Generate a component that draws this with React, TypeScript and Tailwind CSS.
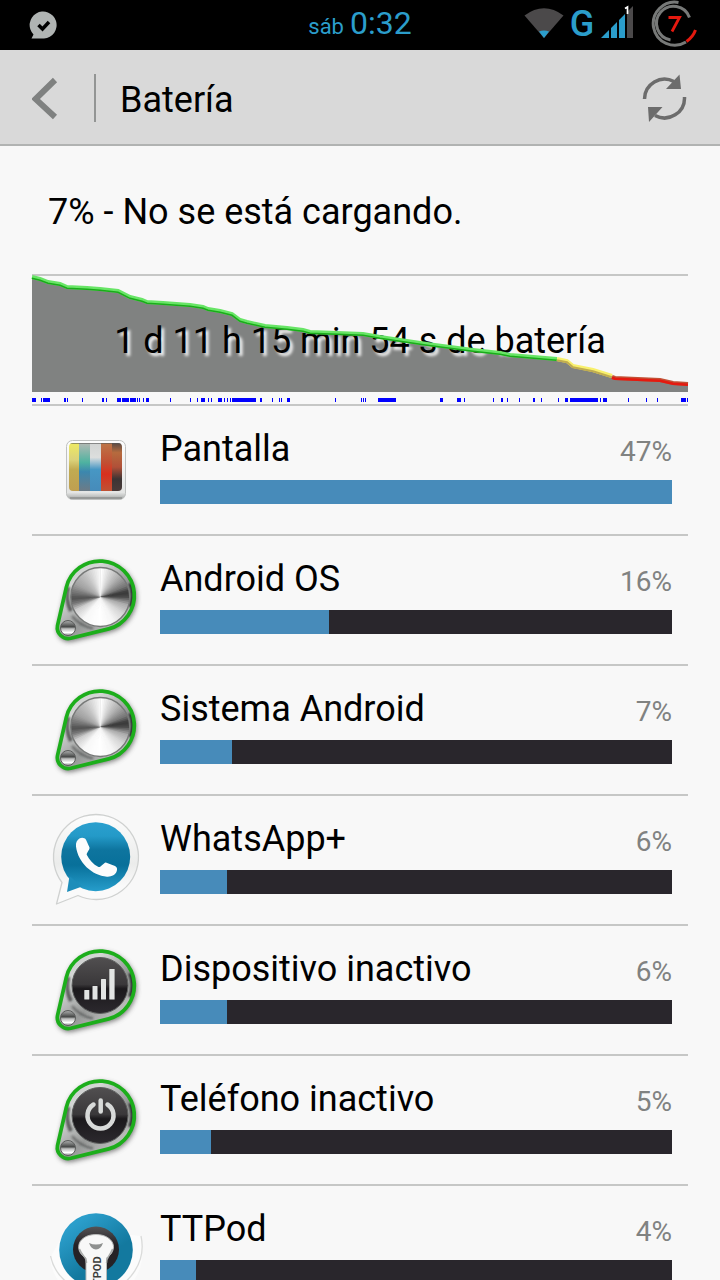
import type { ReactNode } from 'react';

const TICKS: [number, number][] = [
  [0, 4], [9, 1], [11, 7], [32, 2], [35, 1], [50, 1], [70, 2], [74, 1], [85, 4], [90, 7], [98, 6], [105, 1], [107, 1],
  [111, 1], [114, 3], [138, 1], [158, 1], [165, 1], [169, 4], [176, 1], [179, 1], [186, 4], [192, 1], [195, 1], [198, 1],
  [200, 24], [228, 2], [240, 1], [247, 1], [249, 1], [255, 3], [303, 1], [329, 1], [331, 1], [333, 1], [346, 18],
  [408, 3], [425, 4], [432, 1], [461, 1], [469, 2], [475, 1], [487, 1], [501, 2], [509, 1], [526, 1], [533, 3],
  [538, 28], [568, 1], [571, 4], [596, 1], [614, 1], [625, 1], [649, 5], [655, 1],
];

const GREEN =
  '0,1 8,3 16,6 28,8 35,11 55,12 68,13 86,15 98,21 110,24 115,26 131,27 158,29 171,31 176,33 188,35 200,38 208,44 215,46 233,50 255,52 271,54 278,56 305,57 331,58 348,61 368,64 395,68 418,71 441,74 468,77 478,79 525,83';
const YELLOW = '525,83 535,85 541,90 561,94 580,100';
const RED = '580,101 583,102 628,104 641,107 656,108';

function BatteryChart() {
  return (
    <div className="grid h-32">
      <svg className="col-start-1 row-start-1 h-32 w-full" viewBox="0 0 656 128" preserveAspectRatio="none" aria-hidden="true">
        <polygon points={`${GREEN} ${YELLOW} ${RED} 656,116 0,116`} fill="#808281" />
        {TICKS.map(([x, w]) => (
          <rect key={x} x={x} y={122} width={w} height={4} fill="#0000ff" />
        ))}
      </svg>
      <p className="col-start-1 row-start-1 self-center pt-0.5 text-center text-4xl leading-10 [text-shadow:3px_3px_3px_#f8f8f8]">
        1 d 11 h 15 min 54 s de batería
      </p>
      <svg
        className="col-start-1 row-start-1 h-32 w-full overflow-visible"
        viewBox="0 0 656 128"
        preserveAspectRatio="none"
        fill="none"
        aria-hidden="true"
      >
        <polyline points={GREEN} stroke="#68e566" strokeWidth="4" />
        <polyline points={GREEN} stroke="#1aab1a" strokeWidth="1.5" transform="translate(0 1.3)" />
        <polyline points={YELLOW} stroke="#f8f06c" strokeWidth="4" />
        <polyline points={YELLOW} stroke="#c0ac50" strokeWidth="2" transform="translate(0 1.2)" />
        <polyline points={RED} stroke="#c25035" strokeWidth="4" />
        <polyline points={RED} stroke="#e5190f" strokeWidth="2.6" transform="translate(0 0.8)" />
      </svg>
    </div>
  );
}

function IconFrame({ children }: { children: ReactNode }) {
  return (
    <svg className="ml-2 h-[110px] w-[120px] shrink-0" viewBox="0 0 120 110" aria-hidden="true">
      {children}
    </svg>
  );
}

function ScreenIcon() {
  return (
    <svg className="ml-2 h-[110px] w-[120px] shrink-0" viewBox="0 -5 120 110" aria-hidden="true">
      <defs>
        <linearGradient id="tvBody" x1="0" y1="0" x2="0" y2="1">
          <stop offset="0" stopColor="#fdfdfd" />
          <stop offset="0.88" stopColor="#e4e5e4" />
          <stop offset="0.94" stopColor="#c4c6c5" />
          <stop offset="1" stopColor="#989a99" />
        </linearGradient>
        <linearGradient id="tvYellow" x1="0" y1="0" x2="0" y2="1">
          <stop offset="0" stopColor="#eeea62" />
          <stop offset="0.35" stopColor="#dbd27a" />
          <stop offset="0.55" stopColor="#c1ab52" />
          <stop offset="1" stopColor="#bf9f50" />
        </linearGradient>
        <linearGradient id="tvTeal" x1="0" y1="0" x2="0" y2="1">
          <stop offset="0" stopColor="#b4b9b4" />
          <stop offset="0.4" stopColor="#4fb3a0" />
          <stop offset="0.6" stopColor="#3c87ae" />
          <stop offset="1" stopColor="#6d7b86" />
        </linearGradient>
        <linearGradient id="tvBlue" x1="0" y1="0" x2="0" y2="1">
          <stop offset="0" stopColor="#d2d4d3" />
          <stop offset="0.3" stopColor="#dcdedd" />
          <stop offset="0.55" stopColor="#4797c4" />
          <stop offset="1" stopColor="#468bba" />
        </linearGradient>
        <linearGradient id="tvRed" x1="0" y1="0" x2="0" y2="1">
          <stop offset="0" stopColor="#bd7648" />
          <stop offset="0.4" stopColor="#c15033" />
          <stop offset="0.65" stopColor="#d8301e" />
          <stop offset="1" stopColor="#bf5234" />
        </linearGradient>
        <linearGradient id="tvDark" x1="0" y1="0" x2="0" y2="1">
          <stop offset="0" stopColor="#594b45" />
          <stop offset="0.2" stopColor="#b66b3e" />
          <stop offset="0.5" stopColor="#b15038" />
          <stop offset="0.75" stopColor="#3c3434" />
          <stop offset="1" stopColor="#493b3a" />
        </linearGradient>
        <clipPath id="tvClip">
          <rect x="29" y="23" width="53" height="48" rx="4" />
        </clipPath>
      </defs>
      <rect x="26.5" y="20.5" width="59" height="59" rx="6" fill="url(#tvBody)" stroke="#bfc1c0" />
      <path d="M30 78H82" stroke="#979998" strokeWidth="2" />
      <g clipPath="url(#tvClip)">
        <rect x="29" y="23" width="10" height="48" fill="url(#tvYellow)" />
        <rect x="39" y="23" width="11" height="48" fill="url(#tvTeal)" />
        <rect x="50" y="23" width="11" height="48" fill="url(#tvBlue)" />
        <rect x="61" y="23" width="11" height="48" fill="url(#tvRed)" />
        <rect x="72" y="23" width="10" height="48" fill="url(#tvDark)" />
        <rect x="29" y="23" width="53" height="1" fill="#555" opacity="0.6" />
      </g>
    </svg>
  );
}

// Brightness of the brushed metal around the dial, clockwise from the top, in degrees.
const METAL: [number, number][] = [
  [0, 254], [14, 225], [40, 175], [64, 120], [78, 55], [88, 75], [104, 170], [125, 215], [150, 245], [180, 255],
  [215, 248], [240, 205], [254, 120], [265, 80], [276, 110], [295, 160], [325, 195], [345, 228], [361, 254],
];

function metalAt(angle: number) {
  const i = METAL.findIndex(([a]) => a > angle);
  const [a0, v0] = METAL[i - 1];
  const [a1, v1] = METAL[i];
  return Math.round(v0 + ((v1 - v0) * (angle - a0)) / (a1 - a0));
}

function MetalDial() {
  const step = 4;
  return (
    <g>
      <circle cx="60.3" cy="52" r="29.5" fill="#c8c8c8" />
      {Array.from({ length: 360 / step }, (_, i) => {
        const a = i * step;
        const v = metalAt(a);
        const p = (deg: number) => {
          const r = (deg * Math.PI) / 180;
          return `${60.3 + 29.5 * Math.sin(r)} ${52 - 29.5 * Math.cos(r)}`;
        };
        return <path key={a} d={`M60.3 52L${p(a)}L${p(a + step + (i < 89 ? 3 : 0))}Z`} fill={`rgb(${v},${v},${v})`} />;
      })}
      <circle cx="60.3" cy="52" r="29.5" fill="none" stroke="#777978" strokeWidth="1.4" />
    </g>
  );
}

const DROP = 'M17.500 80.600L26.300 42.300A34.500 34.500 0 1 1 68.600 83.900L30.700 93.300A11 11 0 0 1 17.500 80.600Z';

function DialIcon({ id, children }: { id: string; children: ReactNode }) {
  return (
    <IconFrame>
      <defs>
        <linearGradient id={`${id}Rim`} x1="0" y1="0" x2="0.9" y2="1">
          <stop offset="0" stopColor="#c2c4c3" />
          <stop offset="0.3" stopColor="#d6d8d7" />
          <stop offset="0.6" stopColor="#969897" />
          <stop offset="1" stopColor="#d4d6d5" />
        </linearGradient>
        <linearGradient id={`${id}Face`} x1="0" y1="0" x2="0" y2="1">
          <stop offset="0" stopColor="#514f50" />
          <stop offset="0.48" stopColor="#3a383a" />
          <stop offset="0.56" stopColor="#1b191c" />
          <stop offset="1" stopColor="#2c292e" />
        </linearGradient>
        <linearGradient id={`${id}Knob`} x1="0" y1="0" x2="0" y2="1">
          <stop offset="0" stopColor="#b0b2b1" />
          <stop offset="0.42" stopColor="#454746" />
          <stop offset="0.55" stopColor="#b9bbba" />
          <stop offset="0.8" stopColor="#ffffff" />
          <stop offset="1" stopColor="#8b8d8c" />
        </linearGradient>
        <filter id={`${id}Blur`} x="-20%" y="-20%" width="140%" height="140%">
          <feGaussianBlur stdDeviation="2.5" />
        </filter>
        <filter id={`${id}Soft`} x="-50%" y="-20%" width="200%" height="140%">
          <feGaussianBlur stdDeviation="1.2" />
        </filter>
      </defs>
      <path d={DROP} fill="#555" stroke="#555" strokeWidth="3" opacity="0.75" transform="translate(1 2)" filter={`url(#${id}Blur)`} />
      <path d={DROP} fill={`url(#${id}Rim)`} />
      <g fill="none" stroke="#2f3130" strokeWidth="4" filter={`url(#${id}Soft)`}>
        <path d="M28.500 42A32.500 32.500 0 0 0 31 66" opacity="0.7" />
        <path d="M90 38A32.500 32.500 0 0 1 90 62" />
        <path d="M32 71Q40 81 53 83.500" strokeWidth="2" opacity="0.6" />
      </g>
      {children}
      <circle cx="28" cy="83" r="7.500" fill={`url(#${id}Knob)`} stroke="#5b5d5c" />
      <path d={DROP} fill="none" stroke="#1cae1b" strokeWidth="3.700" strokeLinejoin="round" />
    </IconFrame>
  );
}

function SignalDialIcon() {
  return (
    <DialIcon id="signal">
      <circle cx="60" cy="50.500" r="28" fill="url(#signalFace)" stroke="#5c5e5d" />
      <g fill="#e2e4e3">
        <rect x="44.300" y="55" width="5" height="9.500" rx="0.500" />
        <rect x="52.500" y="51" width="5" height="13.500" rx="0.500" />
        <rect x="61" y="44" width="5" height="20.500" rx="0.500" />
        <rect x="69.300" y="34" width="5.300" height="30.500" rx="0.500" />
      </g>
    </DialIcon>
  );
}

function PowerDialIcon() {
  return (
    <DialIcon id="power">
      <circle cx="60" cy="50.500" r="28" fill="url(#powerFace)" stroke="#5c5e5d" />
      <path d="M53.500 39.500A13 13 0 1 0 67.500 39.500" fill="none" stroke="#d8dad9" strokeWidth="4.500" strokeLinecap="round" />
      <path d="M60.700 35.500V46.500" stroke="#d8dad9" strokeWidth="4.500" strokeLinecap="round" />
    </DialIcon>
  );
}

function WhatsAppIcon() {
  return (
    <IconFrame>
      <defs>
        <linearGradient id="waBlue" x1="0" y1="0" x2="0" y2="1">
          <stop offset="0" stopColor="#2a9fce" />
          <stop offset="0.2" stopColor="#249ac8" />
          <stop offset="0.4" stopColor="#0e759f" />
          <stop offset="0.62" stopColor="#08709a" />
          <stop offset="1" stopColor="#269dcb" />
        </linearGradient>
        <linearGradient id="waWhite" x1="0" y1="0" x2="0" y2="1">
          <stop offset="0" stopColor="#fdfdfd" />
          <stop offset="0.55" stopColor="#ebeceb" />
          <stop offset="0.8" stopColor="#fafafa" />
        </linearGradient>
      </defs>
      <path
        d="M16.500 99L22 77.500A42.500 42.500 0 1 1 38 90.500Z"
        fill="url(#waWhite)"
        stroke="#cfd1d0"
        strokeWidth="1.300"
        strokeLinejoin="round"
      />
      <circle cx="55.700" cy="51.700" r="34.500" fill="url(#waBlue)" />
      <path d="M27 87L29.500 71L42 81.500Z" fill="#1d8dba" />
      <path
        d="M39.800 33.300C42 32.200 44.800 32.800 46 34.700L49.500 42.500C50 44.500 46.600 47.400 46.700 49.700C49.500 55 53 59.200 58.500 62C60.500 62.800 63.300 58 65.800 57.500L75 61C77.200 62 77.500 64 76.700 66.300C75.500 69.800 71.500 72 67 71.700C52 70.500 38 57.500 36 41.500C35.600 37.800 37 34.800 39.800 33.300Z"
        fill="#fcfcfc"
      />
    </IconFrame>
  );
}

function TTPodIcon() {
  return (
    <svg className="ml-2 h-[110px] w-[120px] shrink-0" viewBox="0 5 120 110" aria-hidden="true">
      <defs>
        <linearGradient id="ttBlue" x1="0" y1="0" x2="0.7" y2="1">
          <stop offset="0.2" stopColor="#2b9ecb" />
          <stop offset="0.7" stopColor="#13799f" />
        </linearGradient>
        <linearGradient id="ttRing" x1="0" y1="0" x2="0" y2="1">
          <stop offset="0" stopColor="#555355" />
          <stop offset="0.4" stopColor="#252226" />
        </linearGradient>
      </defs>
      <path d="M10 68A46 46 0 0 0 102 60Q102 50 100 46L92 45L20 50Z" fill="#fcfcfc" />
      <path d="M10.500 66A46 46 0 1 0 101 46" fill="none" stroke="#dadbda" strokeWidth="1.300" />
      <circle cx="56" cy="60" r="36.800" fill="url(#ttBlue)" />
      <circle cx="56" cy="59.500" r="23" fill="url(#ttRing)" />
      <path d="M46 68C41 65 38.500 61 38.700 56.500C39 49 47 44.500 56 44.500S73 49 73.500 56.500C73.500 61 71 65 66.500 68V105H46Z" fill="#f8f8f8" stroke="#b8bab9" />
      <path d="M39.500 59C42 66 47 67.500 46.500 73M72.500 59C70 66 66 67.500 66.500 73" fill="none" stroke="#a9abaa" strokeWidth="1.500" />
      <path d="M49 53Q56 56 63 53Q61 59 56 59.500Q51 59 49 53Z" fill="#8f9190" />
      <text transform="translate(60.500 102) rotate(-90)" fontFamily="Roboto, sans-serif" fontSize="11" fontWeight="700" fill="#3b3d3c">
        TTPOD
      </text>
    </svg>
  );
}

type Usage = { name: string; percent: number; fill: number; icon: ReactNode };

const USAGES: Usage[] = [
  { name: 'Pantalla', percent: 47, fill: 100, icon: <ScreenIcon /> },
  { name: 'Android OS', percent: 16, fill: 33, icon: <DialIcon id="os"><MetalDial /></DialIcon> },
  { name: 'Sistema Android', percent: 7, fill: 14, icon: <DialIcon id="system"><MetalDial /></DialIcon> },
  { name: 'WhatsApp+', percent: 6, fill: 13, icon: <WhatsAppIcon /> },
  { name: 'Dispositivo inactivo', percent: 6, fill: 13, icon: <SignalDialIcon /> },
  { name: 'Teléfono inactivo', percent: 5, fill: 10, icon: <PowerDialIcon /> },
  { name: 'TTPod', percent: 4, fill: 7, icon: <TTPodIcon /> },
];

function UsageRow({ name, percent, fill, icon }: Usage) {
  return (
    <li className="flex h-[130px] items-center border-b-2 border-[#c6c7c6]">
      {icon}
      <div className="min-w-0 flex-1 pr-4 pb-2">
        <div className="flex items-baseline justify-between">
          <span className="text-4xl leading-10">{name}</span>
          <span className="text-[28px] leading-10 text-[#808281]">{percent}%</span>
        </div>
        <div className="mt-2 h-6 bg-[#29262c]">
          <div className="h-6 bg-[#478bba]" style={{ width: `${fill}%` }} />
        </div>
      </div>
    </li>
  );
}

function StatusBar() {
  return (
    <div className="grid h-[50px] shrink-0 grid-cols-[1fr_auto_1fr] items-center bg-black text-[#2b9dcb]">
      <svg className="ml-7 h-8 w-8" viewBox="0 0 32 32" aria-hidden="true">
        <path d="M3.500 29.500L5.500 25.500A13.500 13.500 0 1 1 16 29.500Z" fill="#b0b4b3" />
        <path d="M10.500 16L14.500 20L21 13" fill="none" stroke="#000" strokeWidth="3.500" />
      </svg>
      <p className="flex items-baseline gap-1.5 leading-10">
        <span className="text-[22px]">sáb</span>
        <span className="text-[32px]">0:32</span>
      </p>
      <div className="flex items-center justify-end pr-5">
        <svg className="h-[50px] w-10" viewBox="0 0 40 50" aria-hidden="true">
          <path d="M0.500 15.500Q20 1 39.500 15.500L20 38Z" fill="#4b494a" />
          <path d="M15 31.500Q20 29.500 25 31.500L20 38Z" fill="#2b9dcb" />
        </svg>
        <span className="ml-1 w-7 pb-0.5 text-center text-4xl leading-10 font-medium">G</span>
        <svg className="ml-1 h-[50px] w-9" viewBox="0 0 36 50" aria-hidden="true">
          <path d="M1 38L9 30V38ZM11 38V28L17 22V38ZM19 38V20L25 14V38Z" fill="#2b9dcb" />
          <path d="M27 38V12L33 6V38Z" fill="#4b494a" />
          <path d="M25 8.500L27.500 7V14" fill="none" stroke="#fff" strokeWidth="1.700" />
        </svg>
        <svg className="ml-3 h-[50px] w-[52px]" viewBox="0 0 52 50" aria-hidden="true">
          <g fill="none" strokeWidth="3">
            <path d="M30.500 2.500A21.500 21.500 0 1 0 38 42" stroke="#777978" />
            <path d="M41.500 17.500A17 17 0 1 0 22.500 40" stroke="#777978" />
            <path d="M38.500 41.500Q45 37 47.500 30" stroke="#e5190f" />
          </g>
          <path d="M20.500 17.500H31.500L24 31.500" fill="none" stroke="#e5190f" strokeWidth="2.800" />
        </svg>
      </div>
    </div>
  );
}

export default function App() {
  return (
    <div className="flex h-screen flex-col bg-[#f8f8f8] font-[Roboto,sans-serif] text-black">
      <StatusBar />
      <header className="flex h-24 shrink-0 items-center border-b-2 border-[#b1b3b2] bg-[#d9d9d9] px-8 pt-0.5">
        <button type="button" aria-label="Atrás" className="w-[62px]">
          <svg className="h-12 w-7" viewBox="0 0 28 48" aria-hidden="true">
            <path d="M23 6L3.500 25L23 43" fill="none" stroke="#7f8180" strokeWidth="6" />
          </svg>
        </button>
        <div className="h-12 w-0.5 bg-[#939594]" />
        <h1 className="ml-6 flex-1 pt-1 text-4xl leading-10">Batería</h1>
        <button type="button" aria-label="Actualizar">
          <svg className="h-12 w-12" viewBox="0 0 48 48" aria-hidden="true">
            <g fill="none" stroke="#6c6c6c" strokeWidth="3.500">
              <path d="M4.500 25A20 20 0 0 1 34 7.500" />
              <path d="M44.500 23A20 20 0 0 1 15 41.500" />
            </g>
            <path d="M39.500 0.500L41 15H26ZM8 33H22.500L9 48Z" fill="#6c6c6c" />
          </svg>
        </button>
      </header>
      <main className="min-h-0 flex-1 overflow-y-auto px-8 [scrollbar-width:none]">
        <p className="flex h-32 items-center px-4 pt-1 text-4xl leading-10">7% - No se está cargando.</p>
        <section aria-label="Historial de la batería" className="border-y-2 border-[#c6c7c6]">
          <BatteryChart />
        </section>
        <ul>
          {USAGES.map((usage) => (
            <UsageRow key={usage.name} {...usage} />
          ))}
        </ul>
      </main>
    </div>
  );
}
